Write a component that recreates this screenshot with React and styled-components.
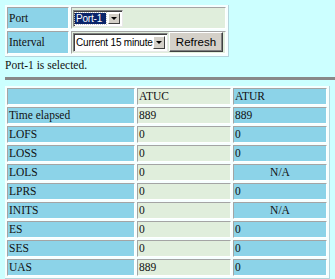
import React from "react";
import styled, { createGlobalStyle } from "styled-components";

const Global = createGlobalStyle`
    html, body {
        margin: 0;
        background: #ccffff;
    }
    body {
        padding: 5px;
        font-family: "Liberation Serif", "Times New Roman", serif;
        font-size: 11.5px;
        color: #111;
    }
`;

const Table = styled.table`
    border-collapse: separate;
    border-spacing: 2px;
    background: #f6ffff;
    border-right: 1px solid #b4d4dc;
    border-bottom: 1px solid #b4d4dc;
    table-layout: fixed;
    width: ${props => props.width}px;
    margin: 0;
`;

const Cell = styled.td`
    background: ${props => props.green ? "#e0eedc" : "#8cd3e8"};
    border-top: 1px solid #a4a4a4;
    border-left: 1px solid #a4a4a4;
    border-bottom: 1px solid #ffffff;
    border-right: 1px solid #ffffff;
    padding: ${props => props.pad || "1px"};
    line-height: 13px;
    height: 13px;
    text-align: ${props => props.center ? "center" : "left"};
    white-space: nowrap;
    overflow: hidden;
`;

const Controls = styled.div`
    display: flex;
    align-items: center;
    gap: 1px;
`;

const Select = styled.div`
    display: flex;
    align-items: stretch;
    width: ${props => props.w}px;
    height: ${props => props.h}px;
    box-sizing: border-box;
    background: #fff;
    border-top: 1px solid #808080;
    border-left: 1px solid #808080;
    border-bottom: 1px solid #e8e8e8;
    border-right: 1px solid #e8e8e8;
    box-shadow: inset 1px 1px 0 #404040;
    font-family: "Liberation Sans", Arial, sans-serif;
    font-size: 10px;
    letter-spacing: -0.2px;
`;

const Value = styled.span`
    flex: 1;
    min-width: 0;
    display: flex;
    align-items: center;
    padding: 0 0 0 ${props => props.selected ? "1px" : "2px"};
    margin: ${props => props.selected ? "2px 2px 2px 1px" : "0"};
    background: ${props => props.selected ? "#0a246a" : "transparent"};
    color: ${props => props.selected ? "#fff" : "#000"};
    outline: ${props => props.selected ? "1px dotted #c0c0c0" : "none"};
    white-space: nowrap;
`;

const Arrow = styled.span`
    flex: none;
    width: 10px;
    margin: 2px 2px 2px 0;
    background: #d4d0c8;
    border-top: 1px solid #fff;
    border-left: 1px solid #fff;
    border-right: 1px solid #404040;
    border-bottom: 1px solid #404040;
    display: flex;
    align-items: center;
    justify-content: center;
    &::after {
        content: "";
        border-left: 3px solid transparent;
        border-right: 3px solid transparent;
        border-top: 3px solid #000;
    }
`;

const Button = styled.button`
    width: 54px;
    height: 20px;
    padding: 0;
    background: #d4d0c8;
    border-top: 1px solid #fff;
    border-left: 1px solid #fff;
    border-right: 1px solid #404040;
    border-bottom: 1px solid #404040;
    box-shadow: inset -1px -1px 0 #808080;
    font-family: "Liberation Sans", Arial, sans-serif;
    font-size: 11.5px;
    color: #000;
`;

const Status = styled.p`
    margin: 2px 0 0;
    line-height: 13px;
`;

const Rule = styled.hr`
    margin: 5px -5px 6px 0;
    height: 3px;
    border: none;
    background: #888;
`;

const rows = [
    ["Time elapsed", "889", "889"],
    ["LOFS", "0", "0"],
    ["LOSS", "0", "0"],
    ["LOLS", "0", "N/A"],
    ["LPRS", "0", "0"],
    ["INITS", "0", "N/A"],
    ["ES", "0", "0"],
    ["SES", "0", "0"],
    ["UAS", "889", "0"],
];

export default function App() {
    return (
        <>
            <Global />
            <Table width={224}>
                <colgroup>
                    <col style={{width: 62}} />
                    <col />
                </colgroup>
                <tbody>
                    <tr>
                        <Cell>Port</Cell>
                        <Cell green pad="2px 1px 1px 1px">
                            <Controls>
                                <Select w={50} h={17}>
                                    <Value selected>Port-1</Value>
                                    <Arrow />
                                </Select>
                            </Controls>
                        </Cell>
                    </tr>
                    <tr>
                        <Cell>Interval</Cell>
                        <Cell green pad="0 1px 1px 1px">
                            <Controls>
                                <Select w={95} h={19}>
                                    <Value>Current 15 minute</Value>
                                    <Arrow />
                                </Select>
                                <Button>Refresh</Button>
                            </Controls>
                        </Cell>
                    </tr>
                </tbody>
            </Table>
            <Status>Port-1 is selected.</Status>
            <Rule />
            <Table width={324}>
                <colgroup>
                    <col style={{width: 128}} />
                    <col style={{width: 94}} />
                    <col style={{width: 94}} />
                </colgroup>
                <tbody>
                    <tr>
                        <Cell></Cell>
                        <Cell green>ATUC</Cell>
                        <Cell>ATUR</Cell>
                    </tr>
                    {rows.map(([name, atuc, atur]) => (
                        <tr key={name}>
                            <Cell>{name}</Cell>
                            <Cell green>{atuc}</Cell>
                            <Cell center={atur === "N/A"}>{atur}</Cell>
                        </tr>
                    ))}
                </tbody>
            </Table>
        </>
    );
}
